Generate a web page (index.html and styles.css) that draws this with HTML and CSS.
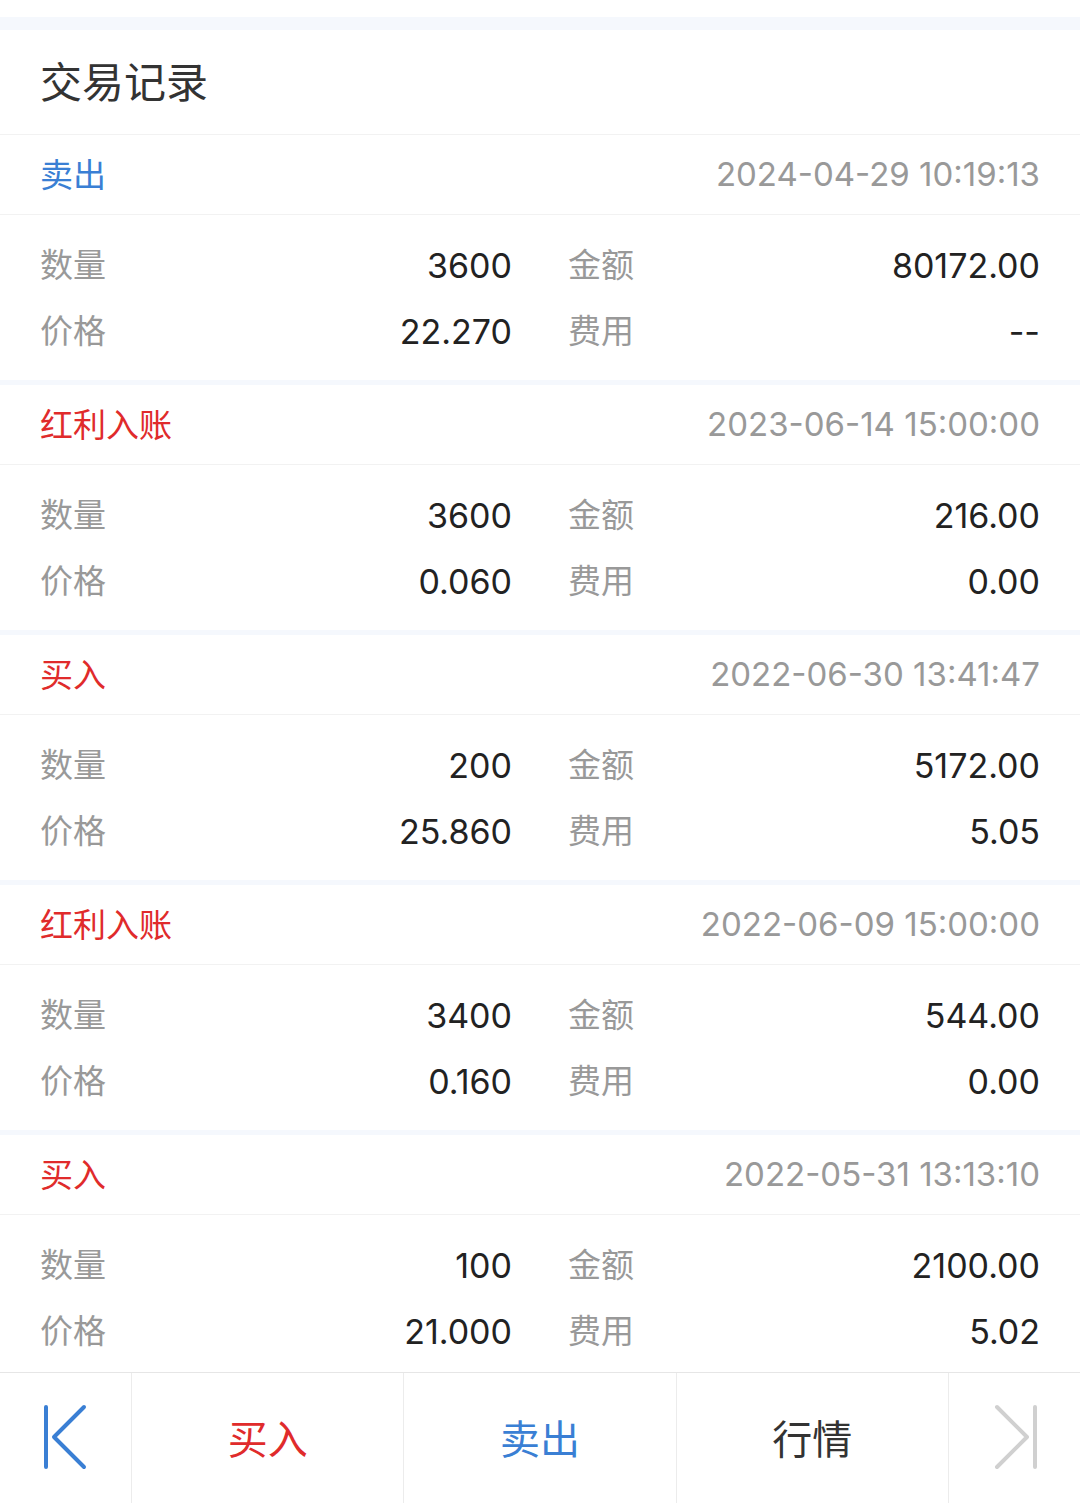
FILE: index.html
```html
<!DOCTYPE html>
<html lang="zh-CN">
<head>
    <meta charset="UTF-8">
    <meta name="viewport" content="width=device-width, initial-scale=1.0">
    <title>交易记录</title>
    <link rel="stylesheet" href="styles.css">
</head>
<body>
    <div class="page">
        <div class="status-gap"></div>
        <div class="title-bar">交易记录</div>

        <!-- Records -->
        <div class="record-list">
            <div class="record">
                <div class="record-head">
                    <span class="type sell">卖出</span>
                    <span class="time">2024-04-29 10:19:13</span>
                </div>
                <div class="record-body">
                    <div class="field"><span class="label">数量</span><span class="value">3600</span></div>
                    <div class="field"><span class="label">金额</span><span class="value">80172.00</span></div>
                    <div class="field"><span class="label">价格</span><span class="value">22.270</span></div>
                    <div class="field"><span class="label">费用</span><span class="value">--</span></div>
                </div>
            </div>

            <div class="record">
                <div class="record-head">
                    <span class="type buy">红利入账</span>
                    <span class="time">2023-06-14 15:00:00</span>
                </div>
                <div class="record-body">
                    <div class="field"><span class="label">数量</span><span class="value">3600</span></div>
                    <div class="field"><span class="label">金额</span><span class="value">216.00</span></div>
                    <div class="field"><span class="label">价格</span><span class="value">0.060</span></div>
                    <div class="field"><span class="label">费用</span><span class="value">0.00</span></div>
                </div>
            </div>

            <div class="record">
                <div class="record-head">
                    <span class="type buy">买入</span>
                    <span class="time">2022-06-30 13:41:47</span>
                </div>
                <div class="record-body">
                    <div class="field"><span class="label">数量</span><span class="value">200</span></div>
                    <div class="field"><span class="label">金额</span><span class="value">5172.00</span></div>
                    <div class="field"><span class="label">价格</span><span class="value">25.860</span></div>
                    <div class="field"><span class="label">费用</span><span class="value">5.05</span></div>
                </div>
            </div>

            <div class="record">
                <div class="record-head">
                    <span class="type buy">红利入账</span>
                    <span class="time">2022-06-09 15:00:00</span>
                </div>
                <div class="record-body">
                    <div class="field"><span class="label">数量</span><span class="value">3400</span></div>
                    <div class="field"><span class="label">金额</span><span class="value">544.00</span></div>
                    <div class="field"><span class="label">价格</span><span class="value">0.160</span></div>
                    <div class="field"><span class="label">费用</span><span class="value">0.00</span></div>
                </div>
            </div>

            <div class="record">
                <div class="record-head">
                    <span class="type buy">买入</span>
                    <span class="time">2022-05-31 13:13:10</span>
                </div>
                <div class="record-body">
                    <div class="field"><span class="label">数量</span><span class="value">100</span></div>
                    <div class="field"><span class="label">金额</span><span class="value">2100.00</span></div>
                    <div class="field"><span class="label">价格</span><span class="value">21.000</span></div>
                    <div class="field"><span class="label">费用</span><span class="value">5.02</span></div>
                </div>
            </div>
        </div>

        <!-- Bottom actions -->
        <div class="action-bar">
            <div class="action-cell">
                <svg class="nav-icon" width="48" height="66" viewBox="0 0 48 66">
                    <path d="M4 3V63M42 3L12 33L42 63" fill="none" stroke="#3a7fd4" stroke-width="4" stroke-linecap="round" stroke-linejoin="round"/>
                </svg>
            </div>
            <div class="action-cell buy">买入</div>
            <div class="action-cell sell">卖出</div>
            <div class="action-cell">行情</div>
            <div class="action-cell">
                <svg class="nav-icon" width="48" height="66" viewBox="0 0 48 66">
                    <path d="M44 3V63M6 3L36 33L6 63" fill="none" stroke="#d0d0d0" stroke-width="4" stroke-linecap="round" stroke-linejoin="round"/>
                </svg>
            </div>
        </div>
    </div>
</body>
</html>
```

FILE: styles.css
```css
:root {
    --blue: #3a7fd4;
    --red: #e02b2b;
    --gray: #999;
    --text: #222;
    --band: #f5f8fd;
    --line: #f2f2f2;
}

* {
    box-sizing: border-box;
    margin: 0;
    padding: 0;
}

body {
    font-family: Inter, "Noto Sans CJK SC", sans-serif;
    color: var(--text);
    background: white;
}

.page {
    display: flex;
    flex-direction: column;
    height: 1503px;
}

.status-gap {
    height: 30px;
    border-top: 17px solid white;
    background: var(--band);
}

.title-bar {
    height: 105px;
    padding: 0 40px 6px;
    display: flex;
    align-items: center;
    font-size: 42px;
    color: #333;
    border-bottom: 1px solid var(--line);
}

.record-list {
    flex: 1;
    overflow: hidden;
    background: var(--band);
}

.record {
    background: white;
    margin-bottom: 5px;
}

.record-head {
    height: 80px;
    padding: 0 40px 3px;
    display: flex;
    justify-content: space-between;
    align-items: center;
    border-bottom: 1px solid var(--line);
}

.type {
    font-size: 33px;
}

.type.sell { color: var(--blue); }
.type.buy { color: var(--red); }

.time {
    font-size: 33px;
    padding-top: 2px;
    color: var(--gray);
}

.record-body {
    display: grid;
    grid-template-columns: 1fr 1fr;
    grid-auto-rows: 66px;
    column-gap: 56px;
    padding: 15px 40px 18px;
}

.field {
    display: flex;
    justify-content: space-between;
    align-items: center;
    font-size: 33px;
}

.label {
    color: var(--gray);
}

.value {
    font-size: 34px;
    padding-top: 4px;
    color: var(--text);
}

.action-bar {
    height: 131px;
    display: grid;
    grid-template-columns: 131px 1fr 1fr 1fr 132px;
    border-top: 1px solid #e6e6e6;
    background: white;
}

.action-cell {
    display: flex;
    justify-content: center;
    align-items: center;
    padding-bottom: 3px;
    font-size: 40px;
    color: #333;
    border-left: 1px solid #ececec;
}

.action-cell:first-child {
    border-left: none;
}

.action-cell.buy { color: var(--red); }
.action-cell.sell { color: var(--blue); }
```
